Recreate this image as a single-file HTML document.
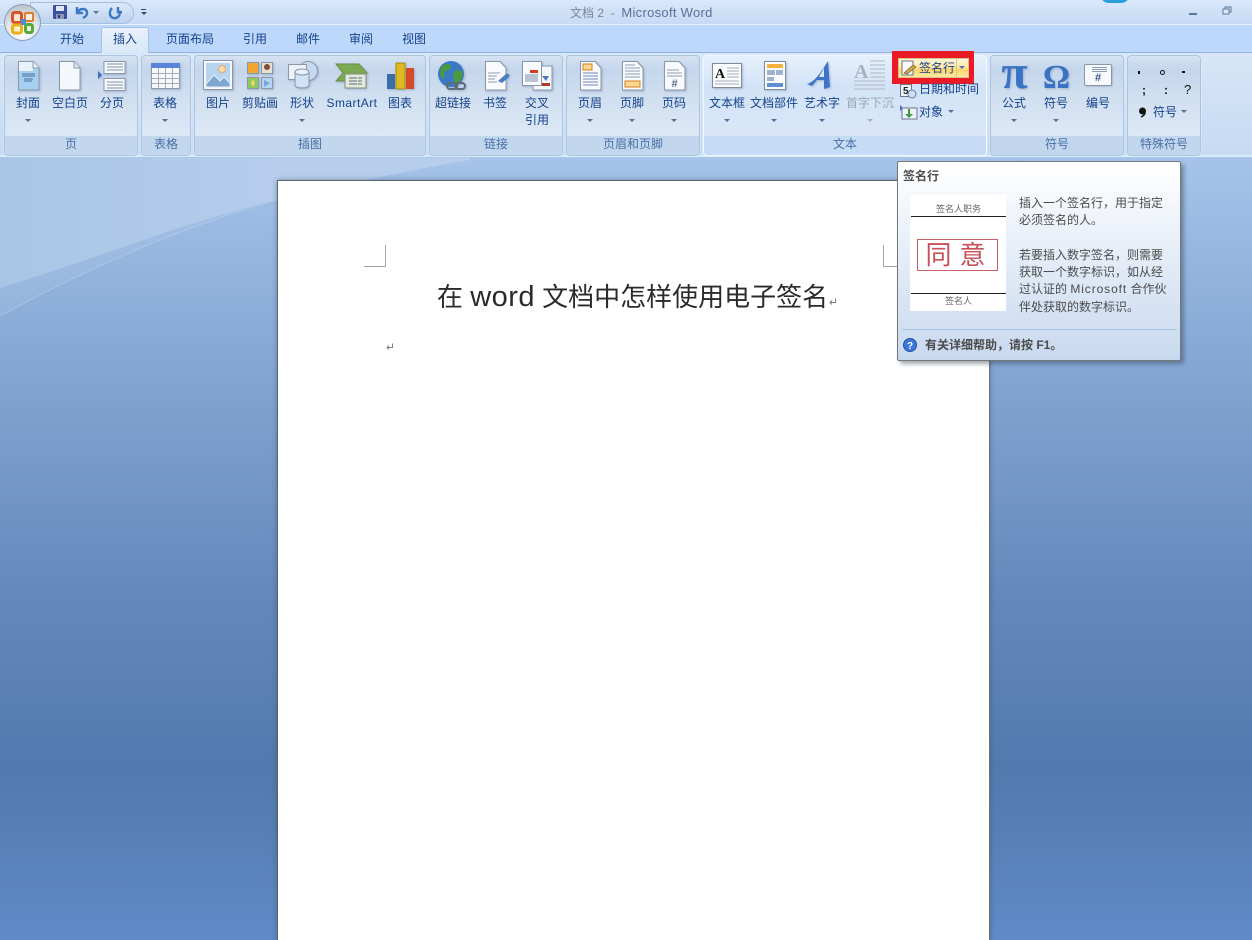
<!DOCTYPE html>
<html><head><meta charset="utf-8">
<style>
html,body{margin:0;padding:0;width:1252px;height:940px;overflow:hidden}
body{position:relative;font-family:"Liberation Sans","WenQuanYi Zen Hei","Noto Sans CJK SC",sans-serif;font-size:12px;color:#15428b}
.a{position:absolute}
.t{position:absolute;white-space:nowrap;line-height:16px;text-align:center;transform:translateX(-50%)}
.l{position:absolute;white-space:nowrap;line-height:16px}
.g{position:absolute;top:55px;height:101px;box-sizing:border-box;border:1px solid #a9c5e2;border-radius:4px;background:linear-gradient(#d5e2f2 0,#c5d6ec 14px,#d0dff0 40px,#dde8f6 80px);overflow:hidden;box-shadow:0 0 0 1px #e3eefb66}
.g .c{position:absolute;left:0;right:0;bottom:0;height:19px;background:#c2d7ee;color:#4a6fa5;text-align:center;line-height:17px;font-size:12px}
.ar{position:absolute;width:0;height:0;border-left:3px solid transparent;border-right:3px solid transparent;border-top:3px solid #56709c;transform:translateX(-50%)}
svg{position:absolute;overflow:visible}
svg.i{filter:drop-shadow(1px 1px 1px #5f759a66)}
</style></head><body>
<!-- workspace -->
<div class="a" style="left:0;top:158px;width:1252px;height:782px;background:linear-gradient(#a6c3ea 0,#7fa2d0 240px,#6488bb 440px,#527aae 607px,#5780b6 680px,#618bc8 782px)"></div>
<svg style="left:0;top:158px" width="1252" height="200" viewBox="0 0 1252 200">
<defs><linearGradient id="sw" x1="0" x2="1" y1="0" y2="0"><stop offset="0" stop-color="#a9c5e6"/><stop offset=".6" stop-color="#b6cdec"/><stop offset="1" stop-color="#b6cdec"/></linearGradient></defs>
<path d="M0 158C70 120 170 72 277 42L277 38L0 130Z" fill="#bcd1ee" opacity=".18"/>
<path d="M0 130C90 103 190 62 277 42C340 27 410 12 470 2L470 0H0Z" fill="url(#sw)"/>
<path d="M0 158C70 120 170 72 277 42" fill="none" stroke="#bcd0ea" stroke-width="1" opacity=".55"/>
</svg>
<!-- title bar -->
<div class="a" style="left:0;top:0;width:1252px;height:25px;background:linear-gradient(#dbe9fb,#cfe0f6 12px,#c6daf5)"></div>
<div class="a" style="left:0;top:24px;width:1252px;height:1px;background:#e8f2fe"></div>
<div class="a" style="left:0;top:25px;width:1252px;height:28px;background:linear-gradient(#bfd9fb,#bcd7fb)"></div>
<div class="a" style="left:0;top:52px;width:1252px;height:1px;background:#90b4dd"></div>
<div class="a" style="left:0;top:53px;width:1252px;height:105px;background:linear-gradient(#d8e6f7,#c6daf2 101px,#d8ecfb 103px);border-bottom:1px solid #a8c6e6;box-sizing:border-box"></div>
<div class="l" style="left:570px;top:5px;color:#7a8698;font-size:12px">文档 2 &nbsp;-&nbsp; <span style="color:#5a7097;font-size:13px;letter-spacing:.3px">Microsoft Word</span></div>
<div class="a" style="left:1100px;top:-6px;width:30px;height:9px;background:#2ba0d8;border-radius:0 0 15px 15px"></div>
<div class="a" style="left:1189px;top:13px;width:8px;height:2px;background:#5d7796"></div>
<svg style="left:1222px;top:6px" width="11" height="10"><rect x="3" y="1" width="6" height="5" fill="#c8dcf4" stroke="#5d7796"/><rect x="1" y="3" width="6" height="5" fill="#dbe9fb" stroke="#5d7796"/></svg>
<!-- QAT -->
<div class="a" style="left:30px;top:2px;width:104px;height:22px;background:linear-gradient(#dce9f9,#bdd2ee);border:1px solid #a4bedd;border-radius:0 12px 12px 0;box-sizing:border-box"></div>
<svg style="left:53px;top:5px" width="15" height="15"><rect x="0" y="0" width="14" height="14" rx="1" fill="#3a4fa0"/><rect x="3" y="1" width="8" height="5" fill="#dfe8f6"/><rect x="3" y="9" width="8" height="5" fill="#8a97b5"/><rect x="5" y="10" width="2" height="3" fill="#2c3a70"/></svg>
<svg style="left:75px;top:5px" width="15" height="15"><path d="M2 2V8H8M3 7C5 3 11 3 12 7C12.500 10 10 12 8 13" fill="none" stroke="#3b78c8" stroke-width="2.400"/></svg>
<div class="ar" style="left:96px;top:11px"></div>
<svg style="left:108px;top:5px" width="15" height="15"><path d="M10 2V7H14M4 3C1 6 1 11 5 13C9 14 12 11 12 7" fill="none" stroke="#3b78c8" stroke-width="2.400"/></svg>
<div class="a" style="left:141px;top:9px;width:5px;height:1px;background:#34496b"></div>
<div class="ar" style="left:143.500px;top:12px;border-top-color:#34496b"></div>
<!-- office button -->
<div class="a" style="left:4px;top:4px;width:37px;height:37px;border-radius:50%;background:radial-gradient(circle at 50% 80%,#fff,#dfe5ea 50%,#a9b4bd);border:1px solid #8b9db0;box-sizing:border-box"></div>
<svg style="left:11px;top:11px" width="24" height="23"><rect x="1.500" y="1.500" width="9" height="10" rx="2" fill="#f8e6d0" stroke="#d9542b" stroke-width="3"/><rect x="14" y="2" width="8" height="8" rx="1" fill="#fbeedd" stroke="#e07c2b" stroke-width="2"/><rect x="1.500" y="14" width="9" height="8" rx="2" fill="#fdf2c8" stroke="#eab01a" stroke-width="3"/><rect x="14.500" y="13.500" width="7" height="8" rx="2" fill="#e5f2d8" stroke="#5ba63c" stroke-width="3"/><rect x="10" y="8" width="5" height="6" fill="#4d8fd0"/></svg>
<!-- tabs -->
<div class="t" style="left:72px;top:31px">开始</div>
<div class="a" style="left:101px;top:27px;width:48px;height:26px;box-sizing:border-box;background:linear-gradient(#e9f2fc,#d9e7f7);border:1px solid #a3c3e6;border-bottom:0;border-radius:3px 3px 0 0"></div>
<div class="t" style="left:125px;top:31px">插入</div>
<div class="t" style="left:190px;top:31px">页面布局</div>
<div class="t" style="left:255px;top:31px">引用</div>
<div class="t" style="left:308px;top:31px">邮件</div>
<div class="t" style="left:361px;top:31px">审阅</div>
<div class="t" style="left:414px;top:31px">视图</div>
<!-- groups -->
<div class="g" style="left:4px;width:134px"><div class="c">页</div></div>
<div class="g" style="left:141px;width:50px"><div class="c">表格</div></div>
<div class="g" style="left:194px;width:232px"><div class="c">插图</div></div>
<div class="g" style="left:429px;width:134px"><div class="c">链接</div></div>
<div class="g" style="left:566px;width:134px"><div class="c">页眉和页脚</div></div>
<div class="g" style="left:703px;width:284px;border-color:#f2f8ff;background:linear-gradient(#e6f0fc,#d3e3f7 30px,#dbe8f8)"><div class="c" style="background:#c6dcf6">文本</div></div>
<div class="g" style="left:990px;width:134px"><div class="c">符号</div></div>
<div class="g" style="left:1127px;width:74px"><div class="c">特殊符号</div></div>
<!-- ribbon labels -->
<div class="t" style="left:28px;top:95px">封面</div><div class="ar" style="left:28px;top:119px"></div>
<div class="t" style="left:70px;top:95px">空白页</div>
<div class="t" style="left:112px;top:95px">分页</div>
<div class="t" style="left:165px;top:95px">表格</div><div class="ar" style="left:165px;top:119px"></div>
<div class="t" style="left:218px;top:95px">图片</div>
<div class="t" style="left:260px;top:95px">剪贴画</div>
<div class="t" style="left:302px;top:95px">形状</div><div class="ar" style="left:302px;top:119px"></div>
<div class="t" style="left:352px;top:95px;letter-spacing:.45px">SmartArt</div>
<div class="t" style="left:400px;top:95px">图表</div>
<div class="t" style="left:453px;top:95px">超链接</div>
<div class="t" style="left:495px;top:95px">书签</div>
<div class="t" style="left:537px;top:95px">交叉</div><div class="t" style="left:537px;top:112px">引用</div>
<div class="t" style="left:590px;top:95px">页眉</div><div class="ar" style="left:590px;top:119px"></div>
<div class="t" style="left:632px;top:95px">页脚</div><div class="ar" style="left:632px;top:119px"></div>
<div class="t" style="left:674px;top:95px">页码</div><div class="ar" style="left:674px;top:119px"></div>
<div class="t" style="left:727px;top:95px">文本框</div><div class="ar" style="left:727px;top:119px"></div>
<div class="t" style="left:774px;top:95px">文档部件</div><div class="ar" style="left:774px;top:119px"></div>
<div class="t" style="left:822px;top:95px">艺术字</div><div class="ar" style="left:822px;top:119px"></div>
<div class="t" style="left:870px;top:95px;color:#9aa6b6">首字下沉</div><div class="ar" style="left:870px;top:119px;border-top-color:#a5aeba"></div>
<div class="t" style="left:1014px;top:95px">公式</div><div class="ar" style="left:1014px;top:119px"></div>
<div class="t" style="left:1056px;top:95px">符号</div><div class="ar" style="left:1056px;top:119px"></div>
<div class="t" style="left:1098px;top:95px">编号</div>
<!-- icons: 页 -->
<svg class="i" style="left:18px;top:61px" width="22" height="30"><path d="M.5.500H15L21 7V29H.5Z" fill="#a5d0f2" stroke="#8a97a8"/><path d="M1 1H15V10H1Z" fill="#e9f2fb"/><path d="M15 .5V7H21" fill="#eef3fa" stroke="#8a97a8"/><path d="M4 13H17M4 15H17M6 18H15M6 20H14" stroke="#4e6b98"/></svg>
<svg class="i" style="left:59px;top:61px" width="22" height="30"><path d="M.5.500H15L21 7V29H.5Z" fill="#f4f7fc" stroke="#8a97a8"/><path d="M15 .5V7H21" fill="#dce4ef" stroke="#8a97a8"/></svg>
<svg class="i" style="left:98px;top:61px" width="28" height="30"><path d="M0 10L4 14L0 18Z" fill="#3c6cc4"/><rect x="6" y=".5" width="21" height="12" fill="#f8fafd" stroke="#8a97a8"/><rect x="6" y="17.500" width="21" height="12" fill="#f8fafd" stroke="#8a97a8"/><path d="M9 3H25M9 6H25M9 9H25M9 21H25M9 24H25M9 27H25" stroke="#7d8ea8"/></svg>
<svg class="i" style="left:151px;top:63px" width="29" height="26"><rect x=".5" y=".5" width="28" height="25" fill="#f6f8fa" stroke="#8a97a8"/><rect x="0" y="0" width="29" height="5" fill="#5b85d8"/><path d="M0 10.500H29M0 15.500H29M0 20.500H29M7.500 5V25M14.500 5V25M21.500 5V25" stroke="#a5adba"/></svg>
<!-- 插图 -->
<svg class="i" style="left:203px;top:60px" width="30" height="30"><rect x=".5" y=".5" width="29" height="29" fill="#f4f7fb" stroke="#8a97a8"/><rect x="3" y="3" width="24" height="24" fill="#b4d4f0"/><circle cx="19" cy="9" r="3.500" fill="#f8dcb0" stroke="#e8a868"/><path d="M3 24L11 15L17 21L21 17L27 23V27H3Z" fill="#7fa6d0" stroke="#e4eef8"/></svg>
<svg class="i" style="left:247px;top:62px" width="27" height="27"><rect x=".5" y=".5" width="11" height="11" fill="#f0a830" stroke="#8a97a8"/><rect x="14.500" y=".5" width="11" height="11" fill="#e6e0d4" stroke="#8a97a8"/><circle cx="20" cy="5" r="3" fill="#80503a"/><rect x=".5" y="15.500" width="11" height="11" fill="#8fc860" stroke="#8a97a8"/><path d="M6 17L8 21L6 25L4 21Z" fill="#f0dc60"/><rect x="14.500" y="15.500" width="11" height="11" fill="#b4d4f4" stroke="#8a97a8"/><path d="M17 18L23 21L17 25Z" fill="#7aa6e0"/></svg>
<svg class="i" style="left:288px;top:60px" width="30" height="30"><circle cx="20" cy="11" r="9.500" fill="#c6d9f0" stroke="#8a97a8"/><rect x=".5" y="4.500" width="18" height="15" fill="#eef3fa" stroke="#8a97a8"/><path d="M7 12V25C7 29 21 29 21 25V12Z" fill="#cfe2f6" stroke="#8a97a8"/><ellipse cx="14" cy="12" rx="7" ry="3" fill="#e8f1fb" stroke="#8a97a8"/></svg>
<svg class="i" style="left:335px;top:63px" width="33" height="27"><path d="M1 1H24L32 10L24 18H1L8 10Z" fill="#7caa52" stroke="#6a8f48"/><rect x="10" y="11" width="21" height="14" fill="#e3e8dc" stroke="#7f8f78"/><path d="M14 15H27M14 18H27M14 21H27" stroke="#5c6e80" stroke-dasharray="8 1"/></svg>
<svg class="i" style="left:386px;top:61px" width="30" height="29"><rect x="1" y="13" width="8" height="15" fill="#3b6ea8"/><rect x="10" y="2" width="9" height="26" fill="#e0b820" stroke="#a88a18"/><rect x="20" y="7" width="8" height="21" fill="#d8482a"/></svg>
<!-- 链接 -->
<svg class="i" style="left:437px;top:60px" width="32" height="31"><circle cx="14" cy="14" r="13" fill="#3979c6"/><path d="M4 7C9 2 15 4 14 8C12 11 8 9 7 14C9 20 5 19 3 15ZM17 12C22 8 26 11 26 16C24 21 21 24 18 24C17 19 15 16 17 12Z" fill="#4b9a42"/><g fill="none" stroke="#606a78" stroke-width="2"><rect x="10" y="23" width="10" height="6" rx="3"/><rect x="18" y="23" width="10" height="6" rx="3"/></g></svg>
<svg class="i" style="left:485px;top:61px" width="26" height="30"><path d="M.5.500H15L21 7V29H.5Z" fill="#f8fafd" stroke="#8a97a8"/><path d="M3 12H15M3 15H12M3 18H10M3 21H12" stroke="#8c9cb0"/><path d="M13 20L21 13C24 12 25 14 24 16L17 22Z" fill="#4a7cc4"/></svg>
<svg class="i" style="left:522px;top:61px" width="31" height="29"><rect x="11" y="5" width="19" height="24" fill="#f6f8fb" stroke="#8a97a8"/><rect x="20" y="22" width="8" height="3" fill="#b03a28"/><rect x=".5" y=".5" width="19" height="24" fill="#f8fafd" stroke="#8a97a8"/><rect x="8" y="9" width="8" height="3" fill="#d83a20"/><path d="M3 14H16M3 16H16M3 18H16M3 20H16" stroke="#7d8ea8"/><path d="M20 15L27 15L24 20Z" fill="#4a7cc4"/></svg>
<!-- 页眉页脚 -->
<svg class="i" style="left:580px;top:61px" width="22" height="30"><path d="M.5.500H15L21 7V29H.5Z" fill="#f8fafd" stroke="#8a97a8"/><rect x="3" y="3" width="9" height="6" fill="#f8d890" stroke="#d8801c"/><path d="M3 12H18M3 15H18M3 18H18M3 21H18M3 24H18" stroke="#7287b8"/></svg>
<svg class="i" style="left:622px;top:61px" width="22" height="30"><path d="M.5.500H15L21 7V29H.5Z" fill="#f8fafd" stroke="#8a97a8"/><path d="M3 4H13M3 7H18M3 10H18M3 13H18M3 16H18" stroke="#8c9cb0"/><rect x="3" y="20" width="15" height="6" fill="#f8d890" stroke="#d8801c"/></svg>
<svg class="i" style="left:664px;top:61px" width="22" height="30"><path d="M.5.500H15L21 7V29H.5Z" fill="#f8fafd" stroke="#8a97a8"/><path d="M3 9H15M3 12H18M3 15H18" stroke="#8c9cb0"/><text x="10.500" y="26" text-anchor="middle" font-size="11" font-weight="bold" fill="#5a6a88" font-family="Liberation Sans">#</text></svg>
<!-- 文本 -->
<svg class="i" style="left:712px;top:63px" width="30" height="25"><rect x=".5" y=".5" width="29" height="24" fill="#fbfcfe" stroke="#7f8b9a"/><text x="3" y="15" font-size="14" font-weight="bold" fill="#111" font-family="Liberation Serif">A</text><path d="M15 5H27M15 8H27M15 11H27M15 14H27M3 18H27M3 21H27" stroke="#a3adbb"/></svg>
<svg class="i" style="left:764px;top:61px" width="22" height="29"><rect x=".5" y=".5" width="21" height="28" fill="#fbfcfe" stroke="#7f8b9a"/><rect x="3" y="3" width="16" height="4" fill="#f4b040"/><rect x="3" y="9" width="8" height="5" fill="#9fb3cf"/><rect x="12" y="9" width="7" height="5" fill="#9fb3cf"/><rect x="3" y="16" width="7" height="4" fill="#9fb3cf"/><rect x="3" y="22" width="16" height="4" fill="#5d8fd4"/></svg>
<svg class="i" style="left:806px;top:60px" width="28" height="30"><path d="M1 24C9 22 15 12 22 1L24 27L18 29L18 20H11L6 26Z" fill="#3e74c8"/><path d="M13 17H18L18 8Z" fill="#dbe8f8"/></svg>
<svg style="left:853px;top:59px" width="32" height="32"><text x="1" y="19" font-size="20" font-weight="bold" fill="#a9b1bc" font-family="Liberation Serif">A</text><path d="M17 2H32M17 6H32M17 10H32M17 14H32M17 18H32M1 22H32M1 26H32M1 30H32" stroke="#b0b8c4"/></svg>
<!-- 签名行 button -->
<div class="a" style="left:892px;top:51px;width:82px;height:33px;background:#ea1b24"></div>
<div class="a" style="left:898px;top:58px;width:71px;height:20px;box-sizing:border-box;border:1px solid #d8c48a;background:linear-gradient(#fff8da 0,#ffe9a8 45%,#ffd668 60%,#ffe9a0)"></div>
<div class="a" style="left:956px;top:58px;width:1px;height:20px;background:#d8c48a"></div>
<svg style="left:901px;top:60px" width="17" height="16"><rect x="1" y="1" width="11" height="14" fill="#f8fafd" stroke="#6a7588"/><path d="M3 13L12 5L15 7L6 14Z" fill="#d8a838" stroke="#60503a" stroke-width=".6"/></svg>
<div class="l" style="left:919px;top:60px">签名行</div>
<div class="ar" style="left:962px;top:66px"></div>
<svg style="left:900px;top:84px" width="17" height="15"><rect x=".5" y=".5" width="11" height="12" fill="#eef3fa" stroke="#6a7588"/><text x="3" y="10" font-size="10" font-weight="bold" fill="#222" font-family="Liberation Sans">5</text><circle cx="12" cy="10" r="4" fill="#cfe0f4" stroke="#5b7cb0"/></svg>
<div class="l" style="left:919px;top:81px">日期和时间</div>
<svg style="left:900px;top:105px" width="18" height="15"><path d="M0 0L3 3L0 6Z" fill="#3c6cc4"/><rect x="2" y="3" width="15" height="11" fill="#eef3fa" stroke="#6a7588"/><path d="M8 4V9H5L9 13L13 9H10V4Z" fill="#3e9a3c"/></svg>
<div class="l" style="left:919px;top:104px">对象</div>
<div class="ar" style="left:951px;top:110px"></div>
<!-- 符号 -->
<svg class="i" style="left:999px;top:55px" width="32" height="36"><text x="15.500" y="33" text-anchor="middle" font-size="48" font-weight="bold" fill="#3a72c4" font-family="Liberation Serif">π</text></svg>
<svg class="i" style="left:1041px;top:55px" width="32" height="36"><text x="15.500" y="33" text-anchor="middle" font-size="34" font-weight="bold" fill="#3a72c4" font-family="Liberation Serif">Ω</text></svg>
<div class="a" style="left:1084px;top:64px;width:28px;height:22px;box-sizing:border-box;border:1px solid #8a97a8;border-radius:2px;background:#f6f9fd;box-shadow:1px 1px 1px #8a97a866"></div>
<svg style="left:1090px;top:67px" width="18" height="6"><path d="M2 .5H17M2 2.500H17M2 4.500H17" stroke="#8c9cb0"/></svg>
<div class="a" style="left:1084px;top:72px;width:28px;text-align:center;font:bold 11px/13px 'Liberation Sans';color:#3c5684">#</div>
<!-- 特殊符号 -->
<div class="a" style="left:1138px;top:71px;width:2px;height:3px;background:#111"></div>
<div class="a" style="left:1160px;top:70px;width:3px;height:3px;border:1px solid #111;border-radius:50%"></div>
<div class="a" style="left:1182px;top:71px;width:3px;height:2px;background:#111"></div>
<div class="l" style="left:1142px;top:82px;color:#111;font-weight:bold">;</div>
<div class="l" style="left:1164px;top:82px;color:#111;font-weight:bold">:</div>
<div class="l" style="left:1184px;top:82px;color:#111;font-size:13px">?</div>
<svg style="left:1139px;top:107px" width="8" height="11"><circle cx="3.500" cy="4" r="3.500" fill="#111"/><path d="M6 5C6 8 4 9 2 10" fill="none" stroke="#111" stroke-width="1.500"/></svg>
<div class="l" style="left:1153px;top:104px">符号</div>
<div class="ar" style="left:1184px;top:110px"></div>
<!-- page -->
<div class="a" style="left:277px;top:180px;width:713px;height:770px;box-sizing:border-box;background:#fff;border:1px solid #5a6470;border-right-color:#6a7480;box-shadow:0 0 5px #33445577"></div>
<div class="a" style="left:364px;top:266px;width:21px;height:1px;background:#a6a6a6"></div>
<div class="a" style="left:385px;top:245px;width:1px;height:22px;background:#a6a6a6"></div>
<div class="a" style="left:883px;top:245px;width:1px;height:22px;background:#a6a6a6"></div>
<div class="a" style="left:883px;top:266px;width:15px;height:1px;background:#a6a6a6"></div>
<div class="l" style="left:437px;top:280px;font-size:26px;line-height:34px;color:#2b2b2b;font-family:'Liberation Sans','Noto Sans CJK SC',sans-serif">在 <span style="font-size:29px;letter-spacing:.45px">word</span> 文档中怎样使用电子签名</div>
<svg style="left:829px;top:298px" width="8" height="8"><path d="M6.500 .5V4.500H1M3 2.500L1 4.500L3 6.500" fill="none" stroke="#7f7f7f"/></svg>
<svg style="left:386px;top:343px" width="8" height="8"><path d="M6.500 .5V4.500H1M3 2.500L1 4.500L3 6.500" fill="none" stroke="#7f7f7f"/></svg>
<!-- tooltip -->
<div class="a" style="left:897px;top:161px;width:284px;height:200px;box-sizing:border-box;border:1px solid #767676;border-radius:2px;background:linear-gradient(#fff 0,#c8d9ef 100%);box-shadow:3px 3px 4px #33445577"></div>
<div class="l" style="left:903px;top:168px;color:#4c4c4c;font-weight:bold;font-size:12px">签名行</div>
<div class="a" style="left:910px;top:195px;width:96px;height:116px;background:#fff"></div>
<div class="a" style="left:911px;top:216px;width:95px;height:1px;background:#222"></div>
<div class="l" style="left:936px;top:202px;color:#666;font-size:9px;line-height:14px">签名人职务</div>
<div class="a" style="left:917px;top:239px;width:81px;height:32px;box-sizing:border-box;border:1px solid #c9606a;color:#c9505a;font:26px/30px 'Liberation Sans','Noto Sans CJK SC',sans-serif;text-align:center;letter-spacing:8px;overflow:hidden;padding-left:4px;white-space:nowrap">同意</div>
<div class="a" style="left:911px;top:293px;width:95px;height:1px;background:#222"></div>
<div class="l" style="left:945px;top:294px;color:#666;font-size:9px;line-height:14px">签名人</div>
<div class="l" style="left:1019px;top:195px;color:#4c4c4c;line-height:17.300px">插入一个签名行，用于指定<br>必须签名的人。<br><br>若要插入数字签名，则需要<br>获取一个数字标识，如从经<br>过认证的 <span style="letter-spacing:.9px">Microsoft</span> 合作伙<br>伴处获取的数字标识。</div>
<div class="a" style="left:902px;top:329px;width:275px;height:1px;background:#a9c4e4"></div>
<svg style="left:903px;top:338px" width="14" height="14"><circle cx="7" cy="7" r="6.500" fill="#3a78d8" stroke="#2a4fa0"/><text x="7" y="11" text-anchor="middle" font-size="10" font-weight="bold" fill="#fff" font-family="Liberation Sans">?</text></svg>
<div class="l" style="left:925px;top:337px;color:#4c4c4c;font-weight:bold">有关详细帮助，请按 F1。</div>
</body></html>
